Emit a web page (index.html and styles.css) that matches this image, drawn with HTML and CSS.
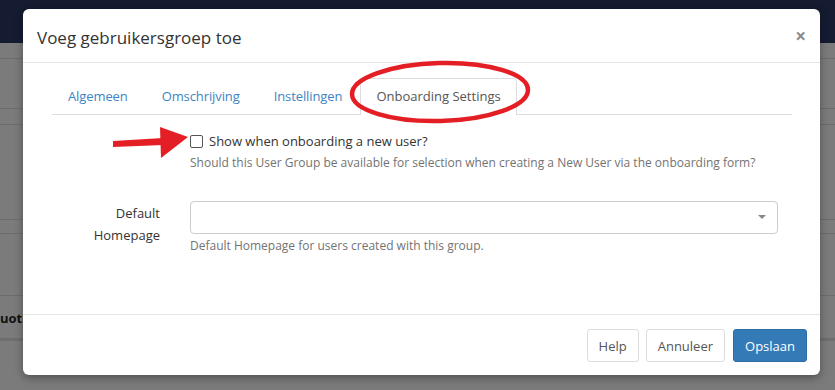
FILE: index.html
```html
<!DOCTYPE html>
<html>
<head>
    <title>Voeg gebruikersgroep toe</title>
    <meta name="viewport" content="width=device-width, initial-scale=1">
    <link rel="stylesheet" href="styles.css">
</head>
<body>
    <div class="topbar"></div>
    <div class="page-rows">
        <div class="page-row" style="height: 15px;"></div>
        <div class="page-row" style="height: 49px;"></div>
        <div class="page-row" style="height: 15px;"></div>
        <div class="page-row" style="height: 94px;"></div>
        <div class="page-row" style="height: 13px;"></div>
        <div class="page-row" style="height: 61px;"></div>
        <div class="page-row page-row-head" style="height: 42px;"><span>uotu</span></div>
    </div>

    <div class="modal">
        <div class="modal-header">
            <h4 class="modal-title">Voeg gebruikersgroep toe</h4>
            <span class="modal-close">&times;</span>
        </div>
        <div class="modal-body">
            <ul class="nav-tabs">
                <li class="tab">Algemeen</li>
                <li class="tab">Omschrijving</li>
                <li class="tab">Instellingen</li>
                <li class="tab active">Onboarding Settings</li>
            </ul>
            <div class="tab-content">
                <div class="form-row">
                    <div class="form-label"></div>
                    <div class="form-control-col">
                        <label class="checkbox-label">
                            <span class="checkbox"></span>
                            Show when onboarding a new user?
                        </label>
                        <div class="help-text">Should this User Group be available for selection when creating a New User via the onboarding form?</div>
                    </div>
                </div>
                <div class="form-row form-row-select">
                    <div class="form-label">Default<br>Homepage</div>
                    <div class="form-control-col">
                        <div class="select-box"><span class="select-caret"></span></div>
                        <div class="help-text">Default Homepage for users created with this group.</div>
                    </div>
                </div>
            </div>
        </div>
        <div class="modal-footer">
            <button class="btn">Help</button>
            <button class="btn">Annuleer</button>
            <button class="btn btn-primary">Opslaan</button>
        </div>
    </div>

    <!-- annotation marks drawn over the screenshot -->
    <svg class="annotations" width="835" height="390" viewBox="0 0 835 390">
        <ellipse cx="440" cy="92" rx="88" ry="29" fill="none" stroke="#e31e24" stroke-width="4.5" transform="rotate(-1.5 440 92)"/>
        <polygon points="113,141 163,138 163,145 113,147" fill="#e31e24"/>
        <polygon points="160,127 188,137 161,158" fill="#e31e24"/>
    </svg>
</body>
</html>
```

FILE: styles.css
```css
body {
    margin: 0;
    background: #7b7b7b;
    font-family: 'Open Sans', Arial, sans-serif;
    width: 835px;
    height: 390px;
    overflow: hidden;
    position: relative;
}

.topbar {
    height: 43px;
    background: #151b30;
}

.page-row {
    border-bottom: 1px solid #6c6c6c;
    box-sizing: content-box;
}

.page-row-head {
    border-bottom: 3px solid #6e6e6e;
    display: flex;
    align-items: center;
}

.page-row-head span {
    font-weight: 700;
    font-size: 13px;
    color: #111;
    margin-top: 2px;
}

.modal {
    position: absolute;
    top: 9px;
    left: 23px;
    width: 797px;
    height: 366px;
    background: #fff;
    border-radius: 6px;
    box-shadow: 0 3px 9px rgba(0,0,0,.35);
    display: flex;
    flex-direction: column;
    color: #333;
}

.modal-header {
    height: 53px;
    border-bottom: 1px solid #e5e5e5;
    display: flex;
    align-items: center;
    justify-content: space-between;
    padding: 0 14px 0 14px;
}

.modal-title {
    margin: 0;
    font-size: 17px;
    font-weight: 400;
    color: #333;
    padding-top: 3px;
}

.modal-close {
    font-size: 19px;
    font-weight: 700;
    color: #8c8c8c;
    line-height: 1;
    padding-top: 1px;
}

.modal-body {
    flex: 1;
    padding: 15px 28px 0 29px;
}

.nav-tabs {
    list-style: none;
    margin: 0;
    padding: 0;
    display: flex;
    border-bottom: 1px solid #ddd;
}

.tab {
    padding: 8px 15px;
    line-height: 19px;
    font-size: 13px;
    letter-spacing: -0.1px;
    color: #3d84c4;
    margin-right: 2px;
    border: 1px solid transparent;
    border-bottom: none;
    border-radius: 4px 4px 0 0;
}

.tab.active {
    color: #555;
    background: #fff;
    border-color: #ddd;
    margin-bottom: -1px;
    padding: 8px 15px 9px;
    letter-spacing: 0;
}

.tab-content {
    padding-top: 17px;
}

.form-row {
    display: flex;
}

.form-label {
    width: 108px;
    text-align: right;
    font-size: 13px;
    line-height: 22px;
    color: #333;
    padding-right: 30px;
}

.form-control-col {
    flex: 1;
    padding-right: 14px;
}

.checkbox-label {
    display: flex;
    align-items: center;
    font-size: 13px;
    line-height: 18px;
    color: #333;
    gap: 6px;
}

.checkbox {
    width: 11px;
    height: 11px;
    border: 1px solid #555;
    border-radius: 2px;
    background: #fff;
}

.help-text {
    font-size: 12px;
    color: #737373;
    margin-top: 5px;
    line-height: 16px;
}

.form-row-select {
    margin-top: 30px;
}

.form-row-select .form-label {
    padding-top: 1px;
}

.select-box {
    height: 31px;
    border: 1px solid #ccc;
    border-radius: 4px;
    position: relative;
}

.select-caret {
    position: absolute;
    right: 11px;
    top: 13px;
    border-style: solid;
    border-width: 4px 4px 0 4px;
    border-color: #888 transparent transparent transparent;
}

.form-row-select .help-text {
    margin-top: 4px;
}

.modal-footer {
    height: 46px;
    border-top: 1px solid #e5e5e5;
    padding: 14px 13px 0 0;
    display: flex;
    justify-content: flex-end;
    gap: 7px;
}

.btn {
    height: 33px;
    padding: 0 11px;
    font-family: 'Open Sans', Arial, sans-serif;
    font-size: 13px;
    color: #555;
    background: #fff;
    border: 1px solid #ddd;
    border-radius: 3px;
}

.btn-primary {
    background: #337ab7;
    border-color: #2e6da4;
    color: #fff;
    margin-left: 1px;
}

.annotations {
    position: absolute;
    top: 0;
    left: 0;
    pointer-events: none;
}
```
